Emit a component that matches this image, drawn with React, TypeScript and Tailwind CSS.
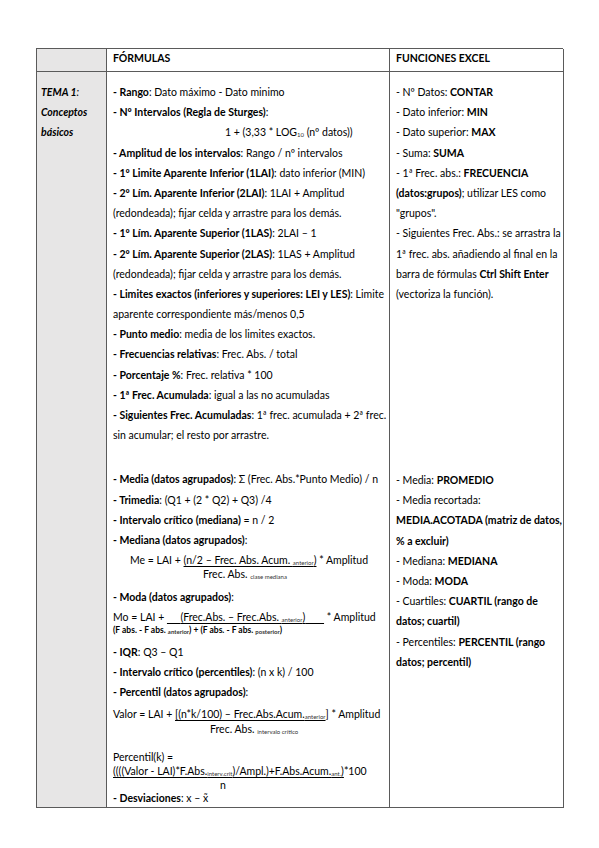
import React from "react";

const B = ({ children }: { children: React.ReactNode }) => (
  <span className="font-bold">{children}</span>
);
const Sub = ({ children }: { children: React.ReactNode }) => (
  <span className="text-[6px] align-[-1px] text-[#333]">{children}</span>
);

const L = ({
  children,
  className = "",
}: {
  children?: React.ReactNode;
  className?: string;
}) => (
  <div className={"h-[20.2px] leading-[20.2px] whitespace-nowrap " + className}>
    {children}
  </div>
);

export default function App() {
  return (
    <div className="w-[599px] h-[848px] bg-white pt-[48px] pl-[36px] text-black text-[10.5px] font-['Lato','Liberation_Sans',sans-serif]">
      <div className="grid grid-cols-[70px_283px_174px] border-t-[1.5px] border-l-[1.5px] border-[#5a5a5a] w-[527px]">
        {/* header row */}
        <div className="h-[23px] bg-[#e7e6e6] border-r-[1.5px] border-b-[1.5px] border-[#5a5a5a]" />
        <div className="h-[23px] border-r-[1.5px] border-b-[1.5px] border-[#5a5a5a] pl-[6px] leading-[18px] font-bold">
          FÓRMULAS
        </div>
        <div className="h-[23px] border-r-[1.5px] border-b-[1.5px] border-[#5a5a5a] pl-[6px] leading-[18px] font-bold">
          FUNCIONES EXCEL
        </div>

        {/* body row */}
        <div className="h-[736px] bg-[#e7e6e6] border-r-[1.5px] border-b-[1.5px] border-[#5a5a5a] pl-[4px] pt-[10px] italic">
          <L>
            <B>TEMA 1</B>:
          </L>
          <L>
            <B>Conceptos</B>
          </L>
          <L>
            <B>básicos</B>
          </L>
        </div>

        <div className="h-[736px] border-r-[1.5px] border-b-[1.5px] border-[#5a5a5a] pl-[6px] pt-[10px]">
          <L>
            <B>- Rango</B>: Dato máximo - Dato minimo
          </L>
          <L>
            <B>- Nº Intervalos (Regla de Sturges)</B>:
          </L>
          <L className="pl-[112px]">
            1 + (3,33 * LOG<Sub>10</Sub> (nº datos))
          </L>
          <L>
            <B>- Amplitud de los intervalos</B>: Rango / nº intervalos
          </L>
          <L>
            <B>- 1º Limite Aparente Inferior (1LAI)</B>: dato inferior (MIN)
          </L>
          <L>
            <B>- 2º Lím. Aparente Inferior (2LAI)</B>: 1LAI + Amplitud
          </L>
          <L>(redondeada); fijar celda y arrastre para los demás.</L>
          <L>
            <B>- 1º Lím. Aparente Superior (1LAS)</B>: 2LAI – 1
          </L>
          <L>
            <B>- 2º Lím. Aparente Superior (2LAS)</B>: 1LAS + Amplitud
          </L>
          <L>(redondeada); fijar celda y arrastre para los demás.</L>
          <L>
            <B>- Limites exactos (inferiores y superiores: LEI y LES)</B>: Limite
          </L>
          <L>aparente correspondiente más/menos 0,5</L>
          <L>
            <B>- Punto medio</B>: media de los limites exactos.
          </L>
          <L>
            <B>- Frecuencias relativas</B>: Frec. Abs. / total
          </L>
          <L>
            <B>- Porcentaje %</B>: Frec. relativa * 100
          </L>
          <L>
            <B>- 1ª Frec. Acumulada</B>: igual a las no acumuladas
          </L>
          <L>
            <B>- Siguientes Frec. Acumuladas</B>: 1ª frec. acumulada + 2ª frec.
          </L>
          <L>sin acumular; el resto por arrastre.</L>

          <L className="mt-[24px]">
            <B>- Media (datos agrupados)</B>: Σ (Frec. Abs.*Punto Medio) / n
          </L>
          <L>
            <B>- Trimedia</B>: (Q1 + (2 * Q2) + Q3) /4
          </L>
          <L>
            <B>- Intervalo crítico (mediana)</B> = n / 2
          </L>
          <L>
            <B>- Mediana (datos agrupados)</B>:
          </L>
          <L className="pl-[17px]">
            Me = LAI +{" "}
            <span className="underline underline-offset-2">
              (n/2 – Frec. Abs. Acum. <Sub>anterior</Sub>)
            </span>{" "}
            * Amplitud
          </L>
          <L className="mt-[-6px] pl-[90px]">
            Frec. Abs. <Sub>clase mediana</Sub>
          </L>
          <L className="mt-[2px]">
            <B>- Moda (datos agrupados)</B>:
          </L>
          <L>
            Mo = LAI +{" "}
            <span className="underline underline-offset-2">
              {"\u00a0\u00a0\u00a0\u00a0\u00a0"}(Frec.Abs. – Frec.Abs. <Sub>anterior</Sub>)
              {"\u00a0\u00a0\u00a0\u00a0\u00a0\u00a0\u00a0"}
            </span>{" "}
            * Amplitud
          </L>
          <L className="mt-[-7px] text-[8.5px] font-bold">
            (F abs. - F abs. <Sub>anterior</Sub>) + (F abs. - F abs. <Sub>posterior</Sub>)
          </L>
          <L className="mt-[2px]">
            <B>- IQR</B>: Q3 – Q1
          </L>
          <L>
            <B>- Intervalo crítico (percentiles)</B>: (n x k) / 100
          </L>
          <L>
            <B>- Percentil (datos agrupados)</B>:
          </L>
          <L className="mt-[1px]">
            Valor = LAI +{" "}
            <span className="underline underline-offset-2">
              [(n*k/100) – Frec.Abs.Acum.<Sub>anterior</Sub>
            </span>
            ] * Amplitud
          </L>
          <L className="mt-[-5px] pl-[97px]">
            Frec. Abs. <Sub>intervalo crítico</Sub>
          </L>
          <L className="mt-[8px]">Percentil(k) =</L>
          <L className="mt-[-6px]">
            <span className="underline underline-offset-2">
              ((((Valor - LAI)*F.Abs.<Sub>interv.crit</Sub>)/Ampl.)+F.Abs.Acum.<Sub>ant.</Sub>)
            </span>
            *100
          </L>
          <L className="mt-[-6px] pl-[107px]">n</L>
          <L className="mt-[-8px]">
            <B>- Desviaciones</B>: x – x̃
          </L>
        </div>

        <div className="h-[736px] border-r-[1.5px] border-b-[1.5px] border-[#5a5a5a] pl-[6px] pt-[10px]">
          <L>
            - Nº Datos: <B>CONTAR</B>
          </L>
          <L>
            - Dato inferior: <B>MIN</B>
          </L>
          <L>
            - Dato superior: <B>MAX</B>
          </L>
          <L>
            - Suma: <B>SUMA</B>
          </L>
          <L>
            - 1ª Frec. abs.: <B>FRECUENCIA</B>
          </L>
          <L>
            <B>(datos:grupos)</B>; utilizar LES como
          </L>
          <L>"grupos".</L>
          <L>- Siguientes Frec. Abs.: se arrastra la</L>
          <L>1ª frec. abs. añadiendo al final en la</L>
          <L>
            barra de fórmulas <B>Ctrl Shift Enter</B>
          </L>
          <L>(vectoriza la función).</L>

          <L className="mt-[166px]">
            - Media: <B>PROMEDIO</B>
          </L>
          <L>- Media recortada:</L>
          <L>
            <B>MEDIA.ACOTADA (matriz de datos,</B>
          </L>
          <L>
            <B>% a excluir)</B>
          </L>
          <L>
            - Mediana: <B>MEDIANA</B>
          </L>
          <L>
            - Moda: <B>MODA</B>
          </L>
          <L>
            - Cuartiles: <B>CUARTIL (rango de</B>
          </L>
          <L>
            <B>datos; cuartil)</B>
          </L>
          <L>
            - Percentiles: <B>PERCENTIL (rango</B>
          </L>
          <L>
            <B>datos; percentil)</B>
          </L>
        </div>
      </div>
    </div>
  );
}
